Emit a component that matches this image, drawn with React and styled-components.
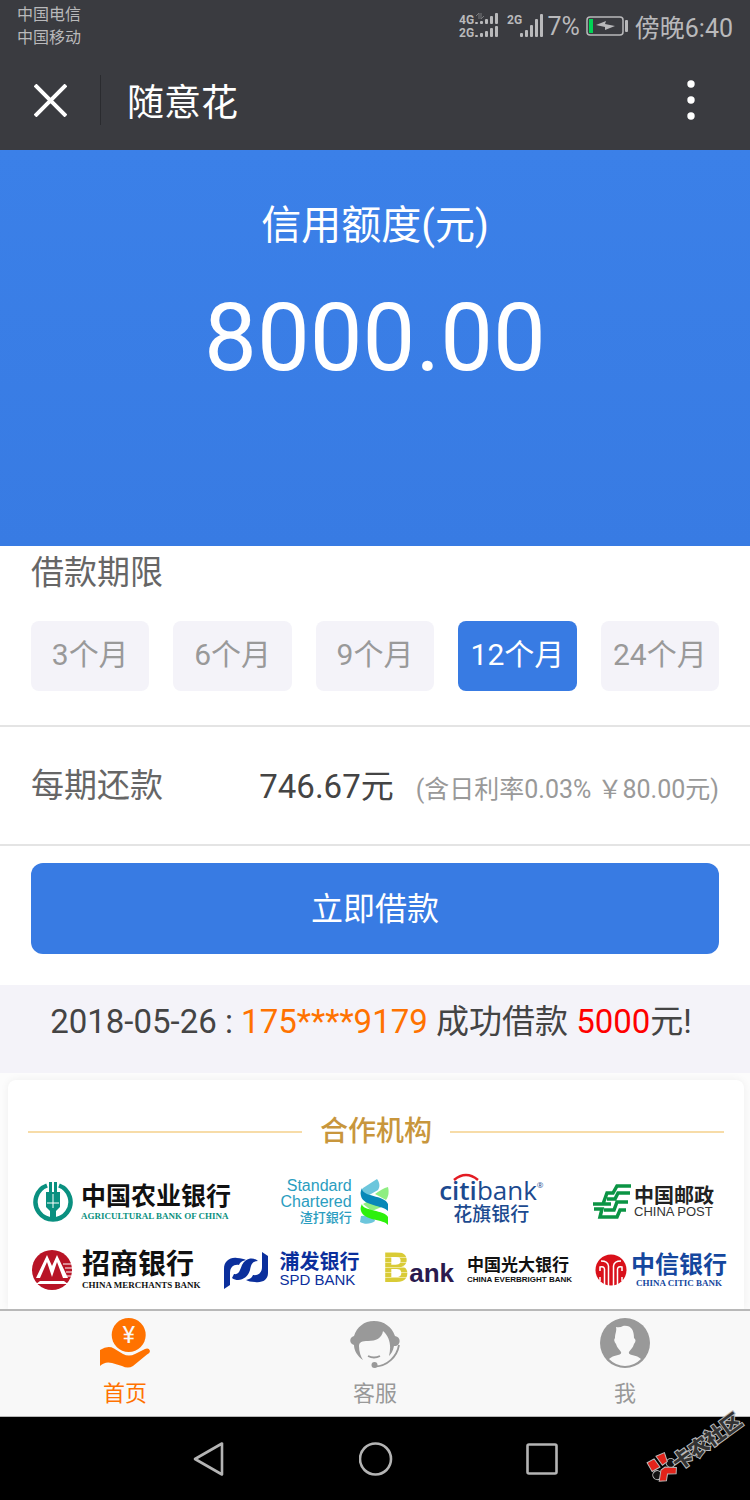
import { useState } from 'react'
import styled, { createGlobalStyle } from 'styled-components'

const GlobalStyle = createGlobalStyle`
  * { box-sizing: border-box; }
  body {
    margin: 0;
    background: #fff;
    font-family: Roboto, "Noto Sans CJK SC", sans-serif;
  }
  button { font-family: inherit; border: none; padding: 0; cursor: pointer; }
  h1, h2, p { margin: 0; font-weight: 400; }
  svg { display: block; flex: none; }
`
const Page = styled.div`
  position: relative;
  display: flex;
  flex-direction: column;
  min-height: 100vh;
`
const StatusBar = styled.div`
  display: flex;
  justify-content: space-between;
  align-items: flex-start;
  height: 50px;
  padding: 3px 17px 0;
  background: #3a3b40;
  color: #b9b9bb;
`
const Carriers = styled.div`
  font-size: 16px;
  line-height: 23px;
`
const StatusRight = styled.div`
  display: flex;
  align-items: center;
  gap: 6px;
  height: 46px;
  font-size: 25px;
`
const SignalGroup = styled.div`
  display: flex;
  align-items: center;
  gap: 2px;
`
const NavBar = styled.header`
  display: flex;
  align-items: center;
  height: 100px;
  padding: 0 48px 0 34px;
  background: #3a3b40;
  color: #fff;
`
const IconBtn = styled.button`
  display: flex;
  background: none;
  color: #fff;
`
const Divider = styled.div`
  width: 1px;
  height: 50px;
  margin: 0 26px 0 33px;
  background: #2a2b2f;
`
const AppTitle = styled.h1`
  flex: 1;
  padding-top: 8px;
  font-size: 37px;
  line-height: 54px;
`
const Hero = styled.section`
  height: 396px;
  padding-top: 46px;
  background: linear-gradient(#3b80e8, #387be3);
  color: #fff;
  text-align: center;
`
const HeroLabel = styled.p`
  font-size: 40px;
  line-height: 60px;
`
const HeroAmount = styled.p`
  margin-top: 24px;
  font-size: 94px;
  line-height: 116px;
`
const Term = styled.section`
  padding: 2px 31px 34px;
  border-bottom: 2px solid #e4e4e4;
`
const Label = styled.h2`
  color: #666;
  font-size: 33px;
  line-height: 50px;
`
const TermList = styled.div`
  display: grid;
  grid-template-columns: repeat(5, 1fr);
  gap: 24px;
  margin-top: 23px;
`
const TermBtn = styled.button`
  height: 70px;
  padding-bottom: 8px;
  border-radius: 8px;
  font-size: 30px;
  background: ${props => props.$active ? '#387be3' : '#f4f3f9'};
  color: ${props => props.$active ? '#fff' : '#999'};
`
const Repay = styled.section`
  display: flex;
  align-items: center;
  justify-content: space-between;
  height: 119px;
  padding: 0 31px;
  border-bottom: 2px solid #e4e4e4;
`
const RepayValue = styled.p`
  padding-top: 6px;
  color: #444;
  font-size: 33px;
  line-height: 50px;
  span {
    margin-left: 22px;
    color: #999;
    font-size: 25px;
  }
`
const Submit = styled.section`
  padding: 17px 31px 31px;
`
const SubmitBtn = styled.button`
  width: 100%;
  height: 91px;
  padding-bottom: 6px;
  border-radius: 12px;
  background: #387be3;
  color: #fff;
  font-size: 32px;
`
const Notice = styled.p`
  height: 88px;
  padding: 12px 8px 0 0;
  background: #f4f3f9;
  color: #444;
  font-size: 33px;
  line-height: 50px;
  text-align: center;
`
const Tint = styled.span`
  color: ${props => props.$color};
`
const Partners = styled.section`
  flex: 1;
  display: flex;
  padding: 7px 6px 0 8px;
  background: #fcfcfc;
`
const PartnerCard = styled.div`
  flex: 1;
  padding: 30px 16px 0 20px;
  border-radius: 8px 8px 0 0;
  background: #fff;
  box-shadow: 0 0 8px rgba(0, 0, 0, 0.06);
`
const PartnerTitle = styled.h2`
  display: flex;
  align-items: center;
  gap: 18px;
  padding-right: 4px;
  color: #c8963c;
  font-size: 28px;
  font-weight: 500;
  line-height: 44px;
  &::before, &::after {
    content: '';
    flex: 1;
    height: 2px;
    background: #f7dca8;
  }
`
const BankRow = styled.div`
  display: flex;
  align-items: center;
  justify-content: space-between;
  height: 56px;
  margin-top: ${props => props.$top}px;
  padding: ${props => props.$pad};
`
const Bank = styled.div`
  position: relative;
  display: flex;
  align-items: center;
  gap: ${props => props.$gap || 8}px;
`
const BankText = styled.div`
  display: flex;
  flex-direction: column;
  align-items: ${props => props.$align || 'flex-start'};
  white-space: nowrap;
`
const BankLine = styled.span`
  color: ${props => props.$color};
  font-size: ${props => props.$size}px;
  font-weight: ${props => props.$weight || 700};
  line-height: ${props => props.$line}px;
  font-family: ${props => props.$serif ? '"Liberation Serif"' : '"Liberation Sans"'}, "Noto Sans CJK SC", sans-serif;
`
const CitiName = styled.span`
  display: flex;
  color: #1c4a8f;
  font-family: "Open Sans", sans-serif;
  font-size: 26px;
  line-height: 26px;
  b { font-weight: 600; }
  small { font-size: 8px; line-height: 16px; }
`
const CitiArc = styled.svg`
  position: absolute;
  top: -4px;
  left: 14px;
`
const BankWord = styled.span`
  display: flex;
  align-items: baseline;
  color: #2a1a4e;
  font-family: "Liberation Sans", sans-serif;
  font-size: 26px;
  font-weight: 700;
  line-height: 40px;
`
const StripedB = styled.span`
  font-family: Roboto, sans-serif;
  font-size: 42px;
  font-weight: 700;
  color: transparent;
  background: repeating-linear-gradient(#d9cb36 0 4px, #efe79a 4px 5px);
  background-clip: text;
`
const TabBar = styled.nav`
  display: grid;
  grid-template-columns: repeat(3, 1fr);
  height: 108px;
  border-top: 2px solid #b8b8b8;
  border-bottom: 1px solid #b8b8b8;
  background: #f8f8f8;
`
const Tab = styled.a`
  display: flex;
  flex-direction: column;
  align-items: center;
  gap: 8px;
  padding-top: 7px;
  color: ${props => props.$active ? '#ff7200' : '#999'};
  font-size: 22px;
  line-height: 36px;
  text-decoration: none;
`
const SystemBar = styled.div`
  display: flex;
  justify-content: center;
  align-items: center;
  gap: 133px;
  height: 83px;
  background: #000;
  button { color: #b4b4b4; }
`
const Watermark = styled.svg`
  position: absolute;
  right: 0;
  bottom: 8px;
`

const bars = (x, y, heights, w, step) => heights.map((h, i) => (
  <rect key={i} x={x + i * step} y={y - h} width={w} height={h} rx='1' fill='currentColor' />
))

const Signals = () => (
  <SignalGroup>
    <svg width='86' height='28' viewBox='0 0 86 28' aria-hidden='true'>
      <g fill='currentColor' fontFamily='Roboto, sans-serif' fontWeight='700' fontSize='12'>
        <text x='0' y='12'>4G</text>
        <text x='0' y='25'>2G</text>
        <text x='48' y='12'>2G</text>
      </g>
      <path d='M17 4l3-3v6M22 1v6l3-3' stroke='#77787b' fill='none' />
      {bars(16, 12, [2, 3, 5, 8, 11], 3, 5)}
      {bars(16, 25, [2, 4, 6, 9, 11], 3, 5)}
      {bars(61, 25, [4, 7, 12, 18, 23], 3, 5)}
    </svg>
    <span>7%</span>
  </SignalGroup>
)

const Battery = () => (
  <svg width='43' height='22' viewBox='0 0 43 22' aria-hidden='true'>
    <rect x='1' y='2' width='36' height='18' rx='3' fill='none' stroke='#b9b9bb' strokeWidth='1.5' />
    <rect x='3' y='4' width='4' height='14' fill='#00d455' />
    <path d='M10 10L20 6L19 9L29 11L19 15L19 12Z' fill='#b9b9bb' />
    <rect x='39' y='5' width='3' height='12' rx='1' fill='#b9b9bb' />
  </svg>
)

const AbcMark = () => (
  <svg width='40' height='40' viewBox='0 0 40 40' aria-hidden='true'>
    <path d='M14 3.500A17.500 17.500 0 1 0 26 3.500' fill='none' stroke='#0a9080' strokeWidth='4.500' />
    <path d='M16 0h3v10h2V0h3v10h3v15l-4 4v10h-6V29l-4-4V10h3z' fill='#0a9080' />
    <path d='M20 12v14M14 21h12' stroke='#fff' />
  </svg>
)

const ScMark = () => (
  <svg width='30' height='46' viewBox='0 0 30 46' aria-hidden='true'>
    <path d='M17 0L3 9C0 12 0 16 4 19L18 11C20 8 20 4 17 0Z' fill='#6cc6dc' />
    <path d='M28 8C24 9 19 12 15 15L26 21C29 17 29 12 28 8Z' fill='#8fee82' />
    <path d='M3 25L14 19L24 27L12 32Z' fill='#8fee82' />
    <path d='M1 37C5 37 9 36 13 35L15 42C11 45 5 46 0 43Z' fill='#6cc6dc' />
    <path d='M2 9C1 18 25 16 28 25V32C23 26 3 27 1 17C0 14 1 11 2 9Z' fill='#0788b8' />
    <path d='M2 25C2 32 25 31 28 38L28 46C24 40 4 42 1 32C0 29 1 27 2 25Z' fill='#2df00c' />
  </svg>
)

const PostMark = () => (
  <svg width='38' height='36' viewBox='0 0 38 36' fill='none' stroke='#0b9444' strokeWidth='3.500' aria-hidden='true'>
    <path d='M38 2H24L20 9H14L10 20M37 9H25L22 15H14M35 18H24L21 26H11M0 20H18M1 25H9L7 33H24L27 26H33' />
  </svg>
)

const CmbMark = () => (
  <svg width='40' height='40' viewBox='0 0 40 40' aria-hidden='true'>
    <circle cx='20' cy='20' r='20' fill='#b81426' />
    <path d='M4 28L15 5l5 11 5-11 11 23h-5L25 12l-5 15-5-15-7 16zM8 31h24l4 3H4z' fill='#fff' />
    <path d='M31 14h8M33 18h7M34 22h6M35 26h4' stroke='#fff' strokeWidth='1' />
  </svg>
)

const SpdMark = () => (
  <svg width='46' height='37' viewBox='0 0 46 37' fill='#0b2f9c' aria-hidden='true'>
    <path d='M1 37V17C1 9 7 5 14 6C18 6 21 7 23 8C18 9 17 11 16 13C10 12 7 16 7 21V33Z' />
    <path d='M11 22C16 23 17 18 19 13C22 7 29 4 35 9C29 9 28 13 27 18C25 26 16 31 9 26Z' />
    <path d='M39 0L45 4V21C45 28 39 31 32 30C28 30 25 29 23 28C28 27 29 25 30 23C36 24 39 20 39 15Z' />
  </svg>
)

const CiticMark = () => (
  <svg width='32' height='32' viewBox='0 0 32 32' aria-hidden='true'>
    <circle cx='16' cy='16' r='15.500' fill='#d9101a' />
    <path d='M13.500 32V12Q13 7 6 7M18.500 32V12Q19 7 26 7M9.500 32V15Q9 12 5 13V17M22.500 32V15Q23 12 27 13V17M5 23V27M27 23V27' fill='none' stroke='#fff' strokeWidth='1.500' />
  </svg>
)

const HomeIcon = () => (
  <svg width='50' height='50' viewBox='0 0 50 50' fill='currentColor' aria-hidden='true'>
    <circle cx='28.700' cy='17' r='17' />
    <text x='28.700' y='25' textAnchor='middle' fill='#f8f8f8' fontSize='24' fontFamily='Roboto, sans-serif'>¥</text>
    <path d='M0 32Q8 27 14 30.500L23 36Q29 39 35 36L45 31Q49 29.500 50 33Q50 35 47 36.500L33 48Q28 51 22 48L12 45Q5 43 0 48Z' />
  </svg>
)

const ServiceIcon = () => (
  <svg width='50' height='50' viewBox='0 0 50 50' fill='currentColor' aria-hidden='true'>
    <path d='M13 42C7 38 4 32 4 27C-1 26-1 19 4 18C7 9 14 3 24 3C34 3 42 9 45 18C51 19 51 26 46 28H44C43 33 41 36 39 38C41 30 41 20 33 13C32 20 26 23 18 23C12 23 9 24 9 28C9 34 11 39 13 42Z' />
    <path d='M49 27C47 39 37 48 25 48.500M18 38Q24 41 30 38' fill='none' stroke='currentColor' strokeWidth='1.800' />
    <circle cx='24.500' cy='47' r='3' />
  </svg>
)

const UserIcon = () => (
  <svg width='50' height='50' viewBox='0 0 50 50' aria-hidden='true'>
    <circle cx='25' cy='25' r='25' fill='currentColor' />
    <path d='M16 9Q20 10 23 8C31 7 34 12 34 20Q37 22 34 26C33 30 30 32 29 34Q28 36 32 37Q38 38 41 41Q34 48 25 48Q16 48 9 41Q12 38 18 37Q22 36 21 34C20 32 17 30 16 26Q13 22 15 20C15 15 17 13 16 9Z' fill='#f8f8f8' />
  </svg>
)

const terms = [3, 6, 9, 12, 24]
const tabs = [
  { id: 'home', name: '首页', Icon: HomeIcon },
  { id: 'service', name: '客服', Icon: ServiceIcon },
  { id: 'me', name: '我', Icon: UserIcon },
]

function App() {
  const [term, setTerm] = useState(12)
  const [tab, setTab] = useState('home')

  return (
    <Page>
      <GlobalStyle />
      <StatusBar>
        <Carriers>
          <div>中国电信</div>
          <div>中国移动</div>
        </Carriers>
        <StatusRight>
          <Signals />
          <Battery />
          <span>傍晚6:40</span>
        </StatusRight>
      </StatusBar>
      <NavBar>
        <IconBtn aria-label='关闭'>
          <svg width='33' height='33' viewBox='0 0 33 33' stroke='currentColor' strokeWidth='4'>
            <path d='M1 1L32 32M32 1L1 32' />
          </svg>
        </IconBtn>
        <Divider />
        <AppTitle>随意花</AppTitle>
        <IconBtn aria-label='更多'>
          <svg width='22' height='40' viewBox='0 0 22 40' fill='currentColor'>
            <circle cx='11' cy='4' r='3.700' />
            <circle cx='11' cy='20' r='3.700' />
            <circle cx='11' cy='36' r='3.700' />
          </svg>
        </IconBtn>
      </NavBar>

      <Hero>
        <HeroLabel>信用额度(元)</HeroLabel>
        <HeroAmount>8000.00</HeroAmount>
      </Hero>

      <Term>
        <Label>借款期限</Label>
        <TermList>
          {terms.map(n => (
            <TermBtn key={n} $active={n === term} onClick={() => setTerm(n)}>{n}个月</TermBtn>
          ))}
        </TermList>
      </Term>

      <Repay>
        <Label>每期还款</Label>
        <RepayValue>746.67元<span>(含日利率0.03% ￥80.00元)</span></RepayValue>
      </Repay>

      <Submit>
        <SubmitBtn>立即借款</SubmitBtn>
      </Submit>

      <Notice>
        2018-05-26 : <Tint $color='#ff7200'>175****9179</Tint> 成功借款 <Tint $color='#f00'>5000</Tint>元!
      </Notice>

      <Partners>
        <PartnerCard>
          <PartnerTitle>合作机构</PartnerTitle>
          <BankRow $top={20} $pad='0 14px 0 5px'>
            <Bank>
              <AbcMark />
              <BankText>
                <BankLine $color='#111' $size={25} $line={28}>中国农业银行</BankLine>
                <BankLine $color='#0a9080' $size={9} $line={12} $serif>AGRICULTURAL BANK OF CHINA</BankLine>
              </BankText>
            </Bank>
            <Bank>
              <BankText $align='flex-end'>
                <BankLine $color='#2a9dc0' $size={16} $line={16} $weight={400}>Standard</BankLine>
                <BankLine $color='#2a9dc0' $size={16} $line={16} $weight={400}>Chartered</BankLine>
                <BankLine $color='#2a9dc0' $size={13} $line={16} $weight={500}>渣打銀行</BankLine>
              </BankText>
              <ScMark />
            </Bank>
            <Bank>
              <BankText $align='center'>
                <CitiName><b>citi</b>bank<small>®</small></CitiName>
                <BankLine $color='#1c4a8f' $size={19} $line={24} $weight={500}>花旗银行</BankLine>
              </BankText>
              <CitiArc width='26' height='8' viewBox='0 0 26 8' aria-hidden='true'>
                <path d='M1 7Q13-3 25 7' fill='none' stroke='#e31b23' strokeWidth='2.500' />
              </CitiArc>
            </Bank>
            <Bank $gap={3}>
              <PostMark />
              <BankText>
                <BankLine $color='#222' $size={20} $line={20}>中国邮政</BankLine>
                <BankLine $color='#333' $size={13} $line={12} $weight={400}>CHINA POST</BankLine>
              </BankText>
            </Bank>
          </BankRow>
          <BankRow $top={12} $pad='0 1px 0 4px'>
            <Bank $gap={10}>
              <CmbMark />
              <BankText>
                <BankLine $color='#111' $size={28} $line={30}>招商银行</BankLine>
                <BankLine $color='#111' $size={9} $line={10} $serif>CHINA MERCHANTS BANK</BankLine>
              </BankText>
            </Bank>
            <Bank $gap={10}>
              <SpdMark />
              <BankText>
                <BankLine $color='#0b2f9c' $size={20} $line={20}>浦发银行</BankLine>
                <BankLine $color='#0b2f9c' $size={15} $line={16} $weight={400}>SPD BANK</BankLine>
              </BankText>
            </Bank>
            <Bank $gap={13}>
              <BankWord><StripedB>B</StripedB>ank</BankWord>
              <BankText>
                <BankLine $color='#111' $size={17} $line={18}>中国光大银行</BankLine>
                <BankLine $color='#111' $size={8} $line={9}>CHINA EVERBRIGHT BANK</BankLine>
              </BankText>
            </Bank>
            <Bank $gap={4}>
              <CiticMark />
              <BankText $align='center'>
                <BankLine $color='#15479e' $size={24} $line={26}>中信银行</BankLine>
                <BankLine $color='#15479e' $size={9} $line={10} $serif>CHINA CITIC BANK</BankLine>
              </BankText>
            </Bank>
          </BankRow>
        </PartnerCard>
      </Partners>

      <TabBar>
        {tabs.map(({ id, name, Icon }) => (
          <Tab key={id} href={`#${id}`} $active={id === tab} onClick={() => setTab(id)}>
            <Icon />
            {name}
          </Tab>
        ))}
      </TabBar>
      <SystemBar>
        <IconBtn aria-label='返回'>
          <svg width='34' height='36' viewBox='0 0 34 36' fill='none' stroke='currentColor' strokeWidth='2.600' strokeLinejoin='round'>
            <path d='M30 2.500V33.500L3 18Z' />
          </svg>
        </IconBtn>
        <IconBtn aria-label='主屏幕'>
          <svg width='34' height='34' viewBox='0 0 34 34' fill='none' stroke='currentColor' strokeWidth='2.600'>
            <circle cx='16.500' cy='17' r='15.500' />
          </svg>
        </IconBtn>
        <IconBtn aria-label='最近任务'>
          <svg width='32' height='32' viewBox='0 0 32 32' fill='none' stroke='currentColor' strokeWidth='2.600'>
            <rect x='1.500' y='1.500' width='29' height='29' rx='1.500' />
          </svg>
        </IconBtn>
      </SystemBar>
      <Watermark width='110' height='90' viewBox='0 0 110 90' aria-hidden='true'>
        <g transform='translate(22 66) rotate(-36)'>
          <circle cx='-8' cy='3' r='4.500' fill='#111' stroke='#bbb' />
          <circle cx='10' cy='1' r='4.500' fill='#111' stroke='#bbb' />
          <path d='M-9-13L-1-12V-2L-10-3ZM2-13L11-11L8-2L2-2ZM-10 9L-2 1H3L12 8L8 13L1 8L-4 13Z' fill='#e2231a' stroke='#bbb' />
          <text x='12' y='12' fontSize='20' fontWeight='900' fontFamily='"Noto Sans CJK SC", sans-serif' fill='#333' stroke='#bbb' strokeWidth='2' paintOrder='stroke'>卡农社区</text>
        </g>
      </Watermark>
    </Page>
  )
}

export default App
